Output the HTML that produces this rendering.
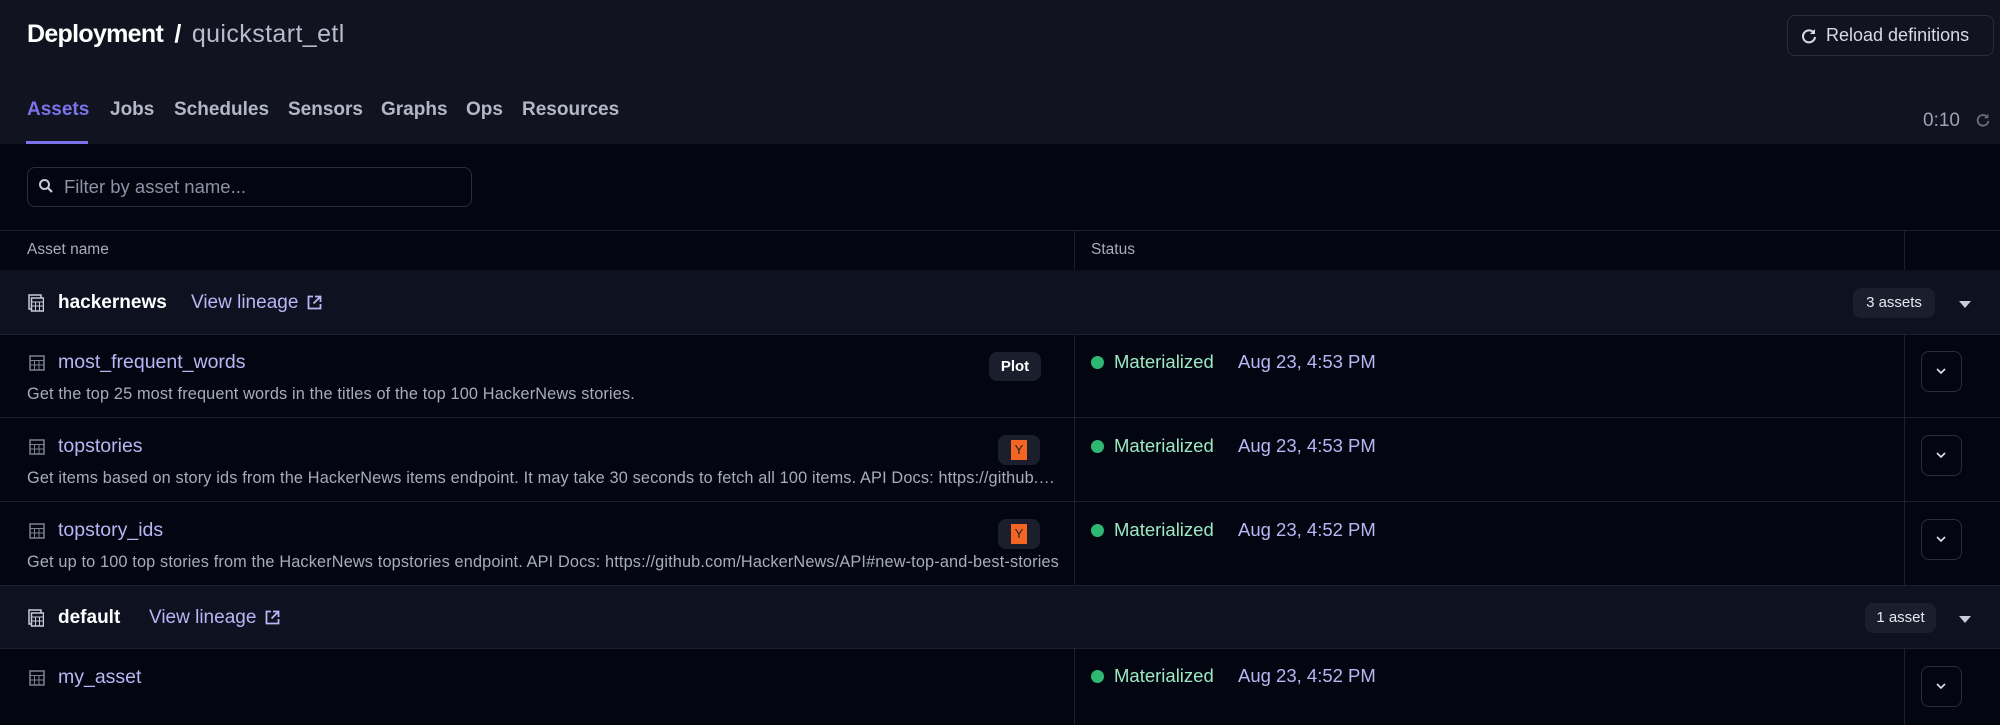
<!DOCTYPE html><html><head><style>
*{box-sizing:border-box;margin:0;padding:0}
body{width:2000px;height:725px;overflow:hidden;background:#030610;font-family:"Liberation Sans",sans-serif;color:#c8cbd8;position:relative}
.abs{position:absolute;white-space:nowrap}
.hdr{position:absolute;left:0;top:0;width:2000px;height:144px;background:#111320}
.line{position:absolute;height:1px;background:#1c1f2c;left:0;width:2000px}
.vl{position:absolute;width:1px;background:#1c1f2c}
.grp{position:absolute;left:0;width:2000px;background:#0e1120}
.name{color:#b8b6f5;font-size:19.5px}
.desc{color:#a8acbb;font-size:16.3px;letter-spacing:0.15px}
.dot{width:13px;height:13px;border-radius:50%;background:#2eb872}
.mat{color:#9ee8c2;font-size:18.5px}
.date{color:#b8b6f5;font-size:18.5px}
.btn{width:41px;height:41px;border:1.5px solid #2a2d3c;border-radius:8px}
.tag{background:#1b1e2c;border-radius:8px}
.y{background:#f26522;width:16px;height:20px;color:#222;font-size:13px;text-align:center;line-height:20px}
</style></head><body>
<div class="hdr"></div>
<div class="abs" style="left:27px;top:20px;font-size:25px;color:#fff;font-weight:bold;letter-spacing:-0.7px">Deployment <span style="margin:0 5px">/</span> <span style="color:#b8bccb;font-weight:normal;letter-spacing:0.4px">quickstart_etl</span></div>
<div class="abs" style="left:1787px;top:15px;width:207px;height:41px;border:1.5px solid #2a2d3c;border-radius:8px;font-size:18px;color:#d8dae4;line-height:38px;padding-left:38px">Reload definitions</div>
<svg class="abs" style="left:1800px;top:27px" width="18" height="18" viewBox="0 0 18 18"><path d="M14 6A6 6 0 1 0 15 10" fill="none" stroke="#d8dae4" stroke-width="2"/><path d="M15 2v5h-5z" fill="#d8dae4"/></svg>
<div class="abs" style="top:99px;font-size:19px;font-weight:bold;color:#b4b8c6">
<span style="position:absolute;left:27px;color:#7a73ec">Assets</span>
<span style="position:absolute;left:110px">Jobs</span>
<span style="position:absolute;left:174px">Schedules</span>
<span style="position:absolute;left:288px">Sensors</span>
<span style="position:absolute;left:381px">Graphs</span>
<span style="position:absolute;left:466px">Ops</span>
<span style="position:absolute;left:522px">Resources</span></div>
<div class="abs" style="left:26px;top:141px;width:62px;height:3px;background:#7a73ec"></div>
<div class="abs" style="left:1923px;top:110px;font-size:19px;color:#9ea2b2">0:10</div>
<svg class="abs" style="left:1975px;top:112px" width="16" height="16" viewBox="0 0 18 18"><path d="M14 6A6 6 0 1 0 15 10" fill="none" stroke="#6a6e7e" stroke-width="2"/><path d="M15 2v5h-5z" fill="#6a6e7e"/></svg>
<div class="abs" style="left:27px;top:167px;width:445px;height:40px;border:1.5px solid #2a2d3c;border-radius:8px;font-size:18.5px;color:#8e92a4;line-height:37px;padding-left:36px">Filter by asset name...</div>
<svg class="abs" style="left:38px;top:178px" width="16" height="16" viewBox="0 0 16 16"><circle cx="6.5" cy="6.5" r="4.5" fill="none" stroke="#c8cbd8" stroke-width="2"/><path d="M10 10l4 4" stroke="#c8cbd8" stroke-width="2.2"/></svg>
<div class="line" style="top:230px"></div>
<div class="abs" style="left:27px;top:241px;font-size:15.5px;color:#a8acbb">Asset name</div>
<div class="abs" style="left:1091px;top:241px;font-size:15.5px;color:#a8acbb">Status</div>
<div class="vl" style="left:1074px;top:230px;height:40px"></div><div class="vl" style="left:1904px;top:230px;height:40px"></div>

<div class="grp" style="top:270px;height:64px"></div>
<div class="grp" style="top:585px;height:63px"></div>
<div class="line" style="top:334px"></div><div class="line" style="top:417px"></div><div class="line" style="top:501px"></div><div class="line" style="top:585px"></div><div class="line" style="top:648px"></div>
<div class="vl" style="left:1074px;top:334px;height:251px"></div><div class="vl" style="left:1904px;top:334px;height:251px"></div>
<div class="vl" style="left:1074px;top:648px;height:77px"></div><div class="vl" style="left:1904px;top:648px;height:77px"></div>

<svg class="abs" style="left:28px;top:294px" width="16" height="18" viewBox="0 0 16 18"><rect x="1" y="1" width="12" height="14" fill="none" stroke="#c8cbd8" stroke-width="1.5"/><rect x="3.5" y="4" width="12" height="13" fill="#0e1120" stroke="#c8cbd8" stroke-width="1.5"/><path d="M3.5 8h12M3.5 12h12M7.5 8v9M11.5 8v9" stroke="#c8cbd8"/></svg>
<div class="abs" style="left:58px;top:292px;font-size:19px;font-weight:bold;color:#fff">hackernews</div>
<div class="abs" style="left:191px;top:292px;font-size:19px;color:#b8b6f5">View lineage</div>
<svg class="abs" style="left:307px;top:295px" width="15" height="15" viewBox="0 0 15 15"><path d="M6 1.5H1.5v12h12V9" fill="none" stroke="#b8b6f5" stroke-width="1.8"/><path d="M8 1.5h5.5V7M13.5 1.5L6.5 8.5" fill="none" stroke="#b8b6f5" stroke-width="1.8"/></svg>
<div class="abs tag" style="left:1853px;top:288px;width:82px;height:30px;font-size:15px;color:#e6e8ef;text-align:center;line-height:30px">3 assets</div>
<div class="abs" style="left:1959px;top:301px;width:0;height:0;border-left:6px solid transparent;border-right:6px solid transparent;border-top:7px solid #c8cbd8"></div>

<svg class="abs" style="left:28px;top:609px" width="16" height="18" viewBox="0 0 16 18"><rect x="1" y="1" width="12" height="14" fill="none" stroke="#c8cbd8" stroke-width="1.5"/><rect x="3.5" y="4" width="12" height="13" fill="#0e1120" stroke="#c8cbd8" stroke-width="1.5"/><path d="M3.5 8h12M3.5 12h12M7.5 8v9M11.5 8v9" stroke="#c8cbd8"/></svg>
<div class="abs" style="left:58px;top:607px;font-size:19px;font-weight:bold;color:#fff">default</div>
<div class="abs" style="left:149px;top:607px;font-size:19px;color:#b8b6f5">View lineage</div>
<svg class="abs" style="left:265px;top:610px" width="15" height="15" viewBox="0 0 15 15"><path d="M6 1.5H1.5v12h12V9" fill="none" stroke="#b8b6f5" stroke-width="1.8"/><path d="M8 1.5h5.5V7M13.5 1.5L6.5 8.5" fill="none" stroke="#b8b6f5" stroke-width="1.8"/></svg>
<div class="abs tag" style="left:1865px;top:603px;width:71px;height:30px;font-size:15px;color:#e6e8ef;text-align:center;line-height:30px">1 asset</div>
<div class="abs" style="left:1959px;top:616px;width:0;height:0;border-left:6px solid transparent;border-right:6px solid transparent;border-top:7px solid #c8cbd8"></div>

<svg class="abs" style="left:29px;top:355px" width="16" height="16" viewBox="0 0 16 16"><rect x="1" y="1" width="14" height="14" fill="none" stroke="#7d8192" stroke-width="1.5"/><path d="M1 5.5h14M1 10h14M5.5 5.5v10M10 5.5v10" stroke="#7d8192"/></svg>
<div class="abs name" style="left:58px;top:351px">most_frequent_words</div>
<div class="abs desc" style="left:27px;top:385px">Get the top 25 most frequent words in the titles of the top 100 HackerNews stories.</div>
<div class="abs tag" style="left:989px;top:352px;width:52px;height:29px;font-size:15px;font-weight:bold;color:#fff;text-align:center;line-height:29px">Plot</div>

<svg class="abs" style="left:29px;top:439px" width="16" height="16" viewBox="0 0 16 16"><rect x="1" y="1" width="14" height="14" fill="none" stroke="#7d8192" stroke-width="1.5"/><path d="M1 5.5h14M1 10h14M5.5 5.5v10M10 5.5v10" stroke="#7d8192"/></svg>
<div class="abs name" style="left:58px;top:435px">topstories</div>
<div class="abs desc" style="left:27px;top:469px;width:1033px;overflow:hidden;text-overflow:ellipsis">Get items based on story ids from the HackerNews items endpoint. It may take 30 seconds to fetch all 100 items. API Docs: https://github.com/HackerNews/API#items</div>
<div class="abs tag" style="left:998px;top:435px;width:42px;height:30px;padding:5px 13px"><div class="y">Y</div></div>

<svg class="abs" style="left:29px;top:523px" width="16" height="16" viewBox="0 0 16 16"><rect x="1" y="1" width="14" height="14" fill="none" stroke="#7d8192" stroke-width="1.5"/><path d="M1 5.5h14M1 10h14M5.5 5.5v10M10 5.5v10" stroke="#7d8192"/></svg>
<div class="abs name" style="left:58px;top:519px">topstory_ids</div>
<div class="abs desc" style="left:27px;top:553px;width:1033px;overflow:hidden;text-overflow:ellipsis">Get up to 100 top stories from the HackerNews topstories endpoint. API Docs: https://github.com/HackerNews/API#new-top-and-best-stories</div>
<div class="abs tag" style="left:998px;top:519px;width:42px;height:30px;padding:5px 13px"><div class="y">Y</div></div>

<svg class="abs" style="left:29px;top:670px" width="16" height="16" viewBox="0 0 16 16"><rect x="1" y="1" width="14" height="14" fill="none" stroke="#7d8192" stroke-width="1.5"/><path d="M1 5.5h14M1 10h14M5.5 5.5v10M10 5.5v10" stroke="#7d8192"/></svg>
<div class="abs name" style="left:58px;top:666px">my_asset</div>

<div class="abs dot" style="left:1091px;top:356px"></div><div class="abs mat" style="left:1114px;top:351px">Materialized</div><div class="abs date" style="left:1238px;top:351px">Aug 23, 4:53 PM</div>
<div class="abs dot" style="left:1091px;top:440px"></div><div class="abs mat" style="left:1114px;top:435px">Materialized</div><div class="abs date" style="left:1238px;top:435px">Aug 23, 4:53 PM</div>
<div class="abs dot" style="left:1091px;top:524px"></div><div class="abs mat" style="left:1114px;top:519px">Materialized</div><div class="abs date" style="left:1238px;top:519px">Aug 23, 4:52 PM</div>
<div class="abs dot" style="left:1091px;top:670px"></div><div class="abs mat" style="left:1114px;top:665px">Materialized</div><div class="abs date" style="left:1238px;top:665px">Aug 23, 4:52 PM</div>

<div class="abs btn" style="left:1921px;top:351px"></div>
<div class="abs btn" style="left:1921px;top:435px"></div>
<div class="abs btn" style="left:1921px;top:519px"></div>
<div class="abs btn" style="left:1921px;top:666px"></div>
<svg class="abs" style="left:1935px;top:366px" width="12" height="10"><path d="M2 3l4 4 4-4" fill="none" stroke="#e0e2ea" stroke-width="1.6"/></svg>
<svg class="abs" style="left:1935px;top:450px" width="12" height="10"><path d="M2 3l4 4 4-4" fill="none" stroke="#e0e2ea" stroke-width="1.6"/></svg>
<svg class="abs" style="left:1935px;top:534px" width="12" height="10"><path d="M2 3l4 4 4-4" fill="none" stroke="#e0e2ea" stroke-width="1.6"/></svg>
<svg class="abs" style="left:1935px;top:681px" width="12" height="10"><path d="M2 3l4 4 4-4" fill="none" stroke="#e0e2ea" stroke-width="1.6"/></svg>
</body></html>
